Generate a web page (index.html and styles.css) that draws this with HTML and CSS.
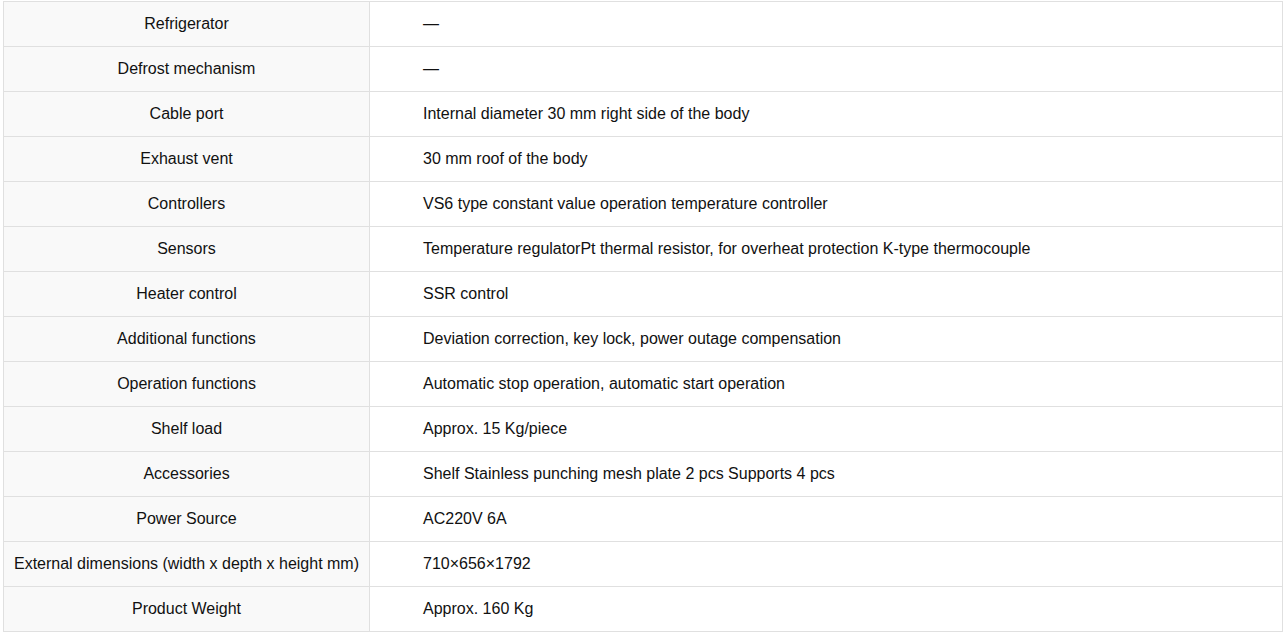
FILE: index.html
```html
<!DOCTYPE html>
<html>
<head>
<meta charset="utf-8">
<link rel="stylesheet" href="styles.css">
</head>
<body>
<table class="spec">
<tbody>
<tr><th>Refrigerator</th><td>—</td></tr>
<tr><th>Defrost mechanism</th><td>—</td></tr>
<tr><th>Cable port</th><td>Internal diameter 30 mm right side of the body</td></tr>
<tr><th>Exhaust vent</th><td>30 mm roof of the body</td></tr>
<tr><th>Controllers</th><td>VS6 type constant value operation temperature controller</td></tr>
<tr><th>Sensors</th><td>Temperature regulatorPt thermal resistor, for overheat protection K-type thermocouple</td></tr>
<tr><th>Heater control</th><td>SSR control</td></tr>
<tr><th>Additional functions</th><td>Deviation correction, key lock, power outage compensation</td></tr>
<tr><th>Operation functions</th><td>Automatic stop operation, automatic start operation</td></tr>
<tr><th>Shelf load</th><td>Approx. 15 Kg/piece</td></tr>
<tr><th>Accessories</th><td>Shelf Stainless punching mesh plate 2 pcs Supports 4 pcs</td></tr>
<tr><th>Power Source</th><td>AC220V 6A</td></tr>
<tr><th>External dimensions (width x depth x height mm)</th><td>710×656×1792</td></tr>
<tr><th>Product Weight</th><td>Approx. 160 Kg</td></tr>
</tbody>
</table>
</body>
</html>
```

FILE: styles.css
```css
html, body {
  margin: 0;
  padding: 0;
  background: #fff;
}
body {
  padding: 1px 4px 0 3px;
  font-family: "Liberation Sans", Arial, sans-serif;
  font-size: 16px;
  color: #111;
}
.spec {
  width: 1280px;
  border-collapse: collapse;
  table-layout: fixed;
}
.spec tr {
  height: 45px;
}
.spec th,
.spec td {
  border: 1px solid #e0e0e0;
  padding: 0;
  height: 44px;
  box-sizing: border-box;
  vertical-align: middle;
  font-weight: normal;
  line-height: 20px;
}
.spec th {
  width: 366px;
  background: #f9f9f9;
  text-align: center;
}
.spec td {
  background: #fff;
  text-align: left;
  padding-left: 53px;
}
```
